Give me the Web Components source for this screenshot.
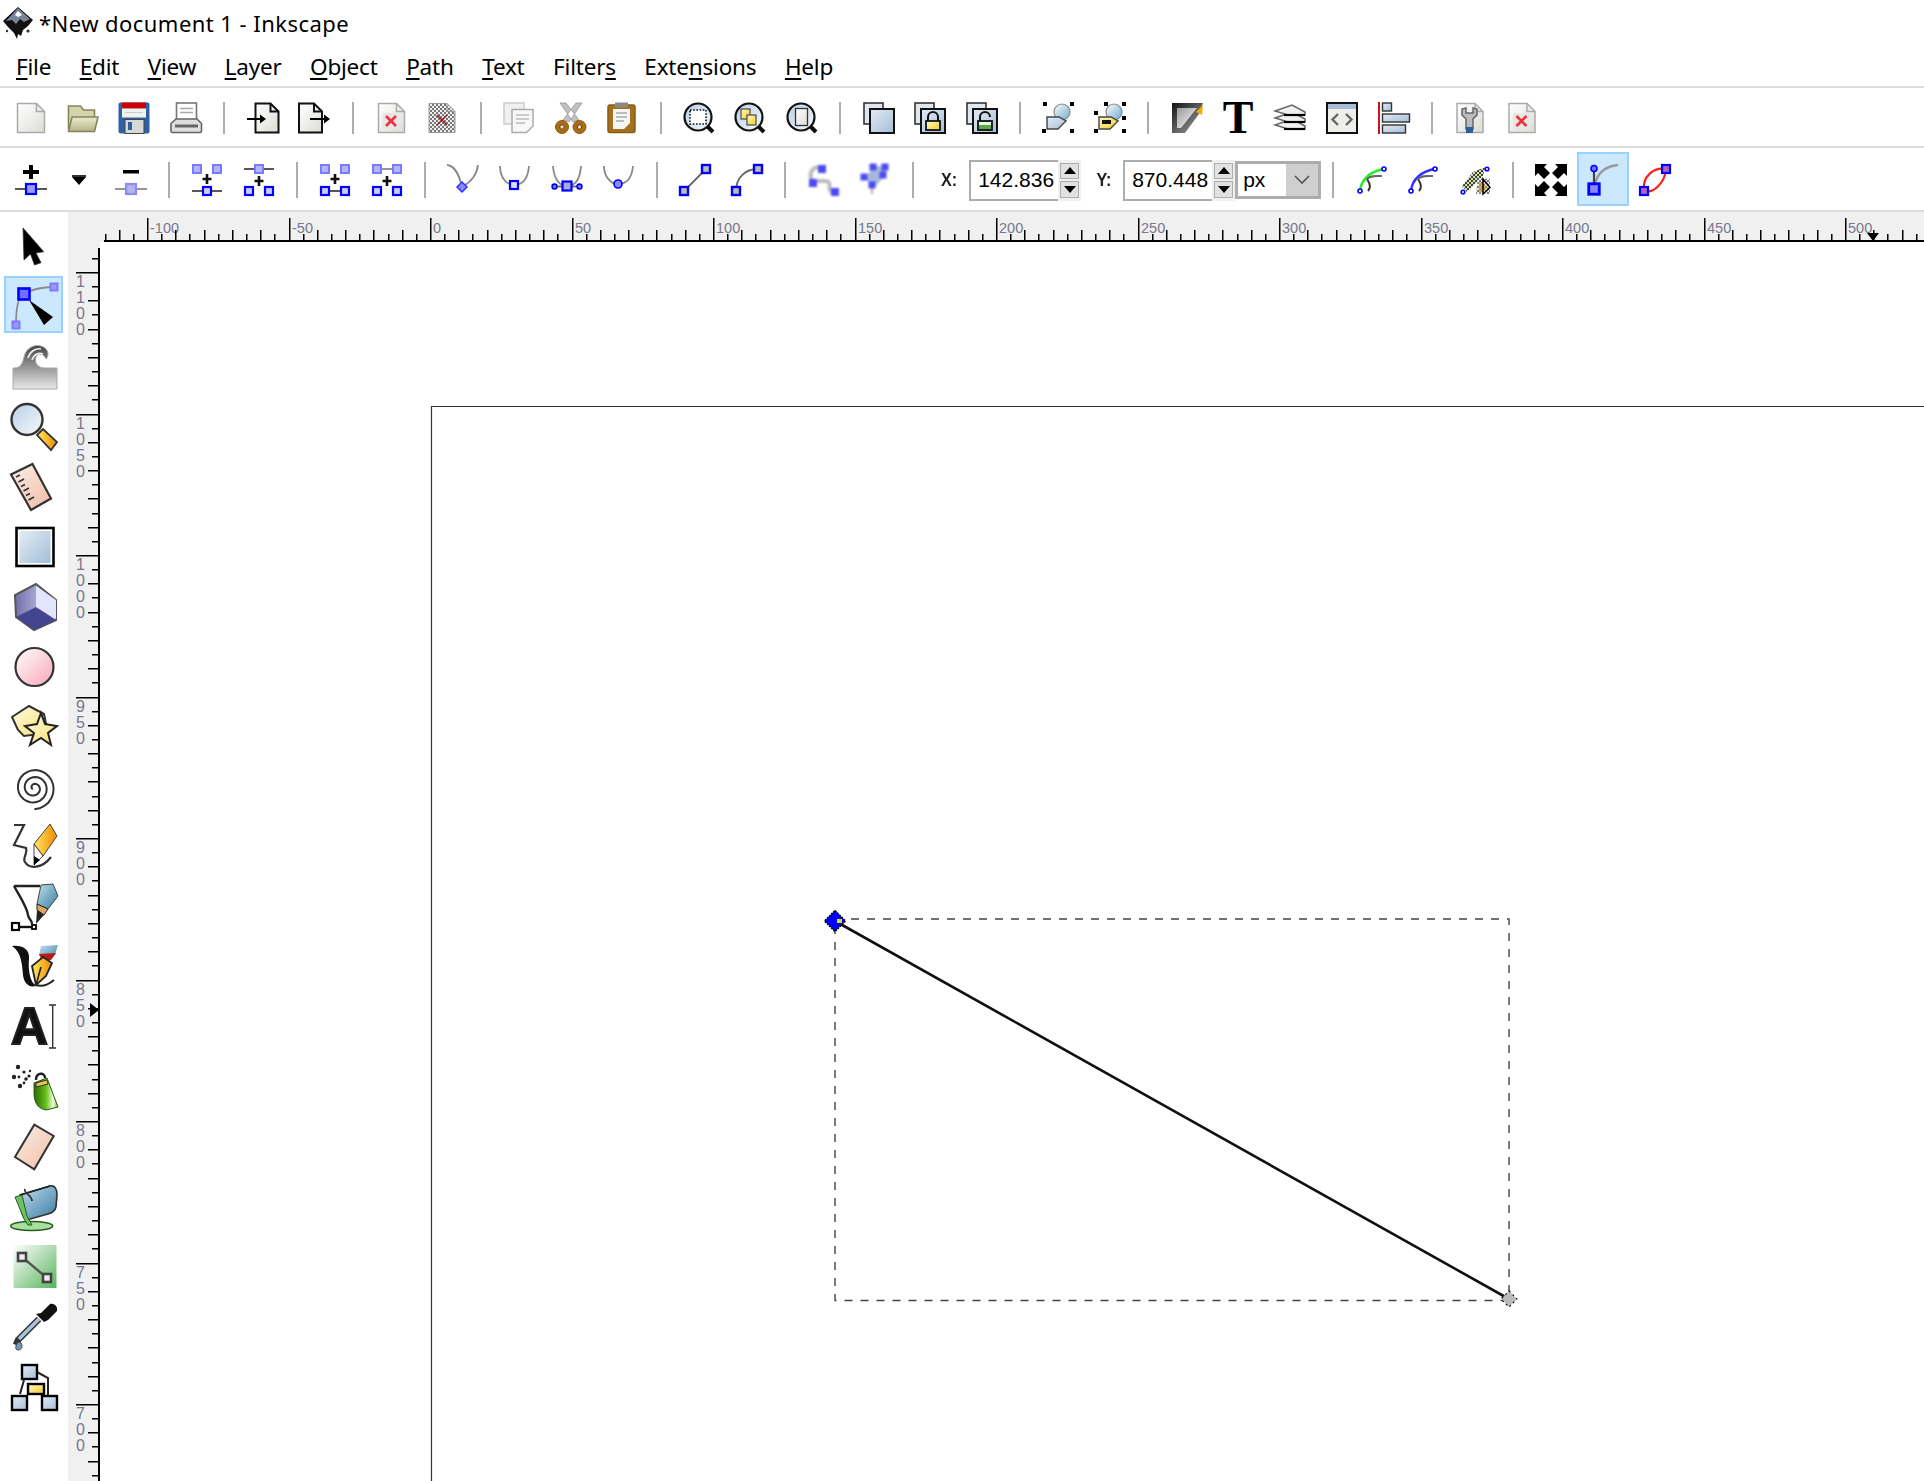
<!DOCTYPE html>
<html>
<head>
<meta charset="utf-8">
<title>Inkscape</title>
<style>
  html, body { margin: 0; padding: 0; background: #fff; overflow: hidden; }
  body { width: 1924px; height: 1481px; display: flex; flex-direction: column; font-family: "Noto Sans", sans-serif; color: #000; }
</style>
</head>
<body>
<ink-title text="*New document 1 - Inkscape"></ink-title>
<ink-menubar>
  <ink-menu label="File" key="0"></ink-menu>
  <ink-menu label="Edit" key="0"></ink-menu>
  <ink-menu label="View" key="0"></ink-menu>
  <ink-menu label="Layer" key="0"></ink-menu>
  <ink-menu label="Object" key="0"></ink-menu>
  <ink-menu label="Path" key="0"></ink-menu>
  <ink-menu label="Text" key="0"></ink-menu>
  <ink-menu label="Filters" key="6"></ink-menu>
  <ink-menu label="Extensions" key="4"></ink-menu>
  <ink-menu label="Help" key="0"></ink-menu>
</ink-menubar>
<ink-bar style="height:58px">
  <ink-btn icon="new"></ink-btn><ink-btn icon="open"></ink-btn><ink-btn icon="save"></ink-btn><ink-btn icon="print"></ink-btn>
  <ink-sep short></ink-sep>
  <ink-btn icon="import"></ink-btn><ink-btn icon="export"></ink-btn>
  <ink-sep short></ink-sep>
  <ink-btn icon="revert"></ink-btn><ink-btn icon="vacuum"></ink-btn>
  <ink-sep short></ink-sep>
  <ink-btn icon="copy"></ink-btn><ink-btn icon="cut"></ink-btn><ink-btn icon="paste"></ink-btn>
  <ink-sep short></ink-sep>
  <ink-btn icon="zoomsel"></ink-btn><ink-btn icon="zoomdraw"></ink-btn><ink-btn icon="zoompage"></ink-btn>
  <ink-sep short></ink-sep>
  <ink-btn icon="dup"></ink-btn><ink-btn icon="clone"></ink-btn><ink-btn icon="unlink"></ink-btn>
  <ink-sep short></ink-sep>
  <ink-btn icon="group"></ink-btn><ink-btn icon="ungroup"></ink-btn>
  <ink-sep short></ink-sep>
  <ink-btn icon="fillstroke"></ink-btn><ink-btn icon="textdlg"></ink-btn><ink-btn icon="layers"></ink-btn><ink-btn icon="xml"></ink-btn><ink-btn icon="align"></ink-btn>
  <ink-sep short></ink-sep>
  <ink-btn icon="prefs"></ink-btn><ink-btn icon="docx"></ink-btn>
</ink-bar>
<ink-bar style="height:62px">
  <ink-btn icon="addnode"></ink-btn><ink-btn icon="drop" style="width:48px"></ink-btn><ink-btn icon="delnode"></ink-btn>
  <ink-sep></ink-sep>
  <ink-btn icon="join"></ink-btn><ink-btn icon="brk"></ink-btn>
  <ink-sep></ink-sep>
  <ink-btn icon="joinseg"></ink-btn><ink-btn icon="delseg"></ink-btn>
  <ink-sep></ink-sep>
  <ink-btn icon="cusp"></ink-btn><ink-btn icon="smooth"></ink-btn><ink-btn icon="auto"></ink-btn><ink-btn icon="sym"></ink-btn>
  <ink-sep></ink-sep>
  <ink-btn icon="segline"></ink-btn><ink-btn icon="segcurve"></ink-btn>
  <ink-sep></ink-sep>
  <ink-btn icon="objpath"></ink-btn><ink-btn icon="strokepath"></ink-btn>
  <ink-sep></ink-sep>
  <ink-spin label="X:" value="142.836" style="width:156px" ></ink-spin>
  <ink-spin label="Y:" value="870.448" style="width:154px"></ink-spin>
  <ink-unit value="px"></ink-unit>
  <ink-sep></ink-sep>
  <ink-btn icon="lpegreen"></ink-btn><ink-btn icon="lpeblue"></ink-btn><ink-btn icon="lpemask"></ink-btn>
  <ink-sep></ink-sep>
  <ink-btn icon="fit"></ink-btn><ink-btn icon="handles" active></ink-btn><ink-btn icon="outline"></ink-btn>
</ink-bar>
<ink-workspace>
  <ink-toolbox slot="tools">
    <ink-tool icon="t-select"></ink-tool>
    <ink-tool icon="t-node" active></ink-tool>
    <ink-tool icon="t-tweak"></ink-tool>
    <ink-tool icon="t-zoom"></ink-tool>
    <ink-tool icon="t-measure"></ink-tool>
    <ink-tool icon="t-rect"></ink-tool>
    <ink-tool icon="t-3d"></ink-tool>
    <ink-tool icon="t-ellipse"></ink-tool>
    <ink-tool icon="t-star"></ink-tool>
    <ink-tool icon="t-spiral"></ink-tool>
    <ink-tool icon="t-pencil"></ink-tool>
    <ink-tool icon="t-pen"></ink-tool>
    <ink-tool icon="t-callig"></ink-tool>
    <ink-tool icon="t-text"></ink-tool>
    <ink-tool icon="t-spray"></ink-tool>
    <ink-tool icon="t-eraser"></ink-tool>
    <ink-tool icon="t-bucket"></ink-tool>
    <ink-tool icon="t-gradient"></ink-tool>
    <ink-tool icon="t-dropper"></ink-tool>
    <ink-tool icon="t-connector"></ink-tool>
  </ink-toolbox>
  <ink-hruler slot="hruler"></ink-hruler>
  <ink-vruler slot="vruler"></ink-vruler>
  <ink-canvas slot="canvas"></ink-canvas>
</ink-workspace>

<script>
// shared gradients, every icon gets its own copy since ids are per shadow root
const lg = (id, a, b, dir = 'x1="0" y1="0" x2="1" y2="1"') =>
  `<linearGradient id="${id}" ${dir}><stop offset="0" stop-color="${a}"/><stop offset="1" stop-color="${b}"/></linearGradient>`;
const V = 'x1="0" y1="0" x2="0" y2="1"';
const H = 'x1="0" y1="0" x2="1" y2="0"';
const DEFS = `<defs>
  ${lg('wd', '#ffffff', '#dcdcd6')}${lg('bl', '#e4ecf5', '#a3bdd8')}${lg('ye', '#fff9c8', '#f5cc20')}
  ${lg('st', '#fffbe4', '#f8e070')}${lg('or', '#ffe860', '#f08a00', H)}${lg('pk', '#ffffff', '#f7a6b6')}
  ${lg('pe', '#fbf0ea', '#f0bba2')}${lg('sl', '#444444', '#e8e8e8', V)}${lg('lb', '#b8cfe6', '#f6f9fc')}
  ${lg('dk', '#111111', '#aaaaaa')}${lg('hx', '#6f6fa8', '#dadafa', H)}${lg('fs', '#999999', '#ffffff')}
  ${lg('gn', '#ffffff', '#58b45e')}${lg('sb', '#bfe0f0', '#3a7aa0')}${lg('ol', '#ececcc', '#b4b488', V)}
  ${lg('cy', '#ffffff', '#6ea8c8')}
  <linearGradient id="gr" x1="0" y1="0" x2="1" y2="0"><stop offset="0" stop-color="#2f6a08"/><stop offset=".5" stop-color="#64c018"/><stop offset=".8" stop-color="#eaffd8"/><stop offset="1" stop-color="#6cc030"/></linearGradient>
  <pattern id="ck" width="4" height="4" patternUnits="userSpaceOnUse"><rect width="4" height="4" fill="#eee"/><rect width="2" height="2" fill="#777"/><rect x="2" y="2" width="2" height="2" fill="#777"/></pattern>
  <pattern id="cg" width="4" height="4" patternUnits="userSpaceOnUse"><rect width="4" height="4" fill="#d4d8b8"/><rect width="2" height="2" fill="#3c4a30"/><rect x="2" y="2" width="2" height="2" fill="#3c4a30"/></pattern>
</defs>`;

const doc = (x, w, st = '#aaa', sw = 1.5, fill = 'url(#wd)') =>
  `<path d="M${x} 1.5H${x + w - 8}L${x + w} 9.5V30.5H${x}Z" fill="${fill}" stroke="${st}" stroke-width="${sw}"/><path d="M${x + w - 8} 1.5V9.5H${x + w}" fill="none" stroke="${st}" stroke-width="${sw}"/>`;
const redx = (cx, cy, r = 5, c = '#f0303c', w = 2.6) =>
  `<path d="M${cx - r} ${cy - r}L${cx + r} ${cy + r}M${cx + r} ${cy - r}L${cx - r} ${cy + r}" stroke="${c}" stroke-width="${w}" fill="none"/>`;
const lens = inner =>
  `<path d="M24 24L30 30" stroke="#111" stroke-width="4"/><circle cx="15" cy="15" r="13.5" fill="url(#lb)" stroke="#111" stroke-width="2.2"/>${inner}`;
const sq = (x, y, s, fill = '#9a9aff', st = '#0000ff', sw = 2) =>
  `<rect x="${x - s / 2}" y="${y - s / 2}" width="${s}" height="${s}" fill="${fill}" stroke="${st}" stroke-width="${sw}"/>`;
const weak = (x, y) => sq(x, y, 8, '#b4b4ff', '#7a7aff', 2);
const strong = (x, y) => sq(x, y, 8, '#ccccff', '#0000ff', 2.2);
const cross = (x, y) => `<path d="M${x} ${y - 5}V${y + 5}M${x - 4.5} ${y}H${x + 4.5}" stroke="#111" stroke-width="2.6"/>`;
const dot = (x, y, r = 2.4, fill = '#8888ff') => `<circle cx="${x}" cy="${y}" r="${r}" fill="${fill}" stroke="#0000ff" stroke-width="1.6"/>`;
const gline = (d, c = '#888', w = 1.8) => `<path d="${d}" fill="none" stroke="${c}" stroke-width="${w}"/>`;
const backs = `<rect x="1" y="1" width="19" height="21" fill="#dfe8f1" stroke="#333" stroke-width="1.6"/><rect x="7" y="7" width="24" height="24" fill="url(#bl)" stroke="#111" stroke-width="2"/>`;
const lpe = c => gline('M4 27C5 15 15 7 28 5', c, 2.4) + gline('M12 27C16 23 13 18 11 15', '#333', 2) + gline('M11 15C15 11 20 12 26 12', '#666', 2) + dot(4, 27, 2, '#fff') + dot(28, 5, 2, '#fff');

function spiral() {
  let d = '';
  for (let a = 0; a <= 18.2; a += 0.25) {
    const r = 1.5 + a * 1.1;
    d += (a ? 'L' : 'M') + (24 + r * Math.cos(a + 2.4)).toFixed(1) + ' ' + (25 + r * Math.sin(a + 2.4)).toFixed(1);
  }
  return d;
}

const ICONS = {
  new: doc(2.5, 27),
  open: `<path d="M1.5 27V4h12l3 4h11v8" fill="#d4d4ac" stroke="#85855c" stroke-width="1.6"/><path d="M1.5 29.5L5 15H31L27.5 29.5Z" fill="url(#ol)" stroke="#85855c" stroke-width="1.6"/>`,
  save: `<rect x=".5" y=".5" width="31" height="31" rx="2" fill="#2f62a4"/><rect x="4" y=".5" width="24" height="6" fill="#cc0000"/><rect x="4" y="6.5" width="24" height="9" fill="#f3f3ee"/><path d="M7 10.5H25" stroke="#ccc"/><rect x="7" y="17.5" width="19" height="14" fill="#d8d8d4" stroke="#444"/><rect x="10" y="20" width="4" height="8" fill="#2f62a4"/>`,
  print: `<rect x="6.5" y="1" width="20" height="18" fill="#fff" stroke="#777" stroke-width="1.6"/><path d="M10 6.5H23M10 10.5H23" stroke="#aaa" stroke-width="1.5"/><path d="M1 29V21.5L6 17H27L31.5 21.5V29Q31.5 30.5 30 30.5H2.5Q1 30.5 1 29Z" fill="#dedede" stroke="#666" stroke-width="1.6"/><rect x="5" y="22.5" width="23" height="3" fill="#666"/>`,
  import: doc(8.5, 23, '#111', 2) + `<path d="M0 17H14" stroke="#000" stroke-width="2"/><path d="M13 12.5L19 17L13 21.5Z" fill="#000"/>`,
  export: doc(1, 23, '#111', 2) + `<path d="M12 17H27" stroke="#000" stroke-width="2"/><path d="M26 12.5L32 17L26 21.5Z" fill="#000"/>`,
  revert: doc(3.5, 26) + `<rect x="7.5" y="11" width="17" height="16" fill="#e6e6e6"/>` + redx(16, 19),
  vacuum: doc(3, 26, '#999', 1, 'url(#ck)') + redx(16, 18, 5, '#a02020', 1.5),
  copy: `<path d="M1 1H21V22H1Z" fill="#f0f0f0" stroke="#ccc" stroke-width="1.5"/><path d="M9 7.5H30V24L23.5 30.5H9Z" fill="#f8f8f8" stroke="#aaa" stroke-width="1.5"/><path d="M13 13H26M13 17H26M13 21H22" stroke="#bbb" stroke-width="1.5"/>`,
  cut: `<path d="M5 1L18 20L24 18L11 1ZM27 1L14 20L8 18L21 1Z" fill="#c0c0c0" stroke="#999" stroke-width=".8"/><circle cx="7" cy="25" r="6.5" fill="#a86c12" stroke="#8a5a10"/><circle cx="24.5" cy="25" r="6.5" fill="#a86c12" stroke="#8a5a10"/><circle cx="7" cy="25" r="2.2" fill="#e8dcc8" stroke="#6a4208"/><circle cx="24.5" cy="25" r="2.2" fill="#e8dcc8" stroke="#6a4208"/>`,
  paste: `<rect x="2" y="3" width="27" height="27.5" rx="2" fill="#a5701e" stroke="#8a5a14" stroke-width="1.5"/><path d="M7 7H24V21L18 27H7Z" fill="#f6f6f4"/><rect x="9" y=".5" width="13" height="5" fill="#8a8a8a"/><path d="M10 11H21M10 15H21M10 19H18" stroke="#aaa" stroke-width="1.5"/>`,
  zoomsel: lens(`<rect x="7" y="8" width="16" height="14" fill="#fff" stroke="#111" stroke-width="1.6" stroke-dasharray="1.6 1.6"/>`),
  zoomdraw: lens(`<rect x="7" y="7" width="9" height="10" fill="url(#ye)" stroke="#555" stroke-width="1.3"/><rect x="13" y="13" width="9" height="10" fill="url(#ye)" stroke="#555" stroke-width="1.3"/>`),
  zoompage: lens(`<rect x="9.5" y="6.5" width="12" height="17" fill="url(#wd)" stroke="#333" stroke-width="1.3"/>`),
  dup: backs,
  clone: backs + `<path d="M14 20V15a5 5 0 0 1 10 0V20" fill="none" stroke="#111" stroke-width="2"/><rect x="12" y="19" width="14" height="9" fill="url(#ye)" stroke="#111" stroke-width="1.8"/>`,
  unlink: backs + `<path d="M14 20V15a5 5 0 0 1 10 0" fill="none" stroke="#111" stroke-width="2"/><rect x="12" y="19" width="14" height="9" fill="#5fa84a" stroke="#111" stroke-width="1.8"/><rect x="13" y="20" width="12" height="3" fill="#eef6e8"/>`,
  group: `<circle cx="20" cy="10" r="8" fill="url(#cy)" stroke="#888" stroke-width="1.2"/><path d="M5 15H17L24 19L16 27H5Z" fill="url(#bl)" stroke="#444" stroke-width="1.4"/><rect x="0" y="27" width="4" height="4" fill="#000"/><rect x="28" y="27" width="4" height="4" fill="#000"/><rect x="0" y="0" width="4" height="4" fill="#000" transform="translate(1 0)"/><rect x="28" y="0" width="4" height="4" fill="#000"/>`,
  ungroup: `<circle cx="20" cy="10" r="8" fill="url(#cy)" stroke="#888" stroke-width="1.2"/><path d="M5 15H17L24 19L16 27H5Z" fill="url(#ye)" stroke="#444" stroke-width="1.4"/><rect x="8" y="18" width="9" height="4" fill="#111"/><rect x="0" y="27" width="4" height="4" fill="#000"/><rect x="28" y="27" width="4" height="4" fill="#000"/><rect x="0" y="9" width="4" height="4" fill="#000"/><rect x="28" y="14" width="4" height="4" fill="#000"/><rect x="10" y="0" width="4" height="4" fill="#000"/><rect x="28" y="0" width="4" height="4" fill="#000"/>`,
  fillstroke: `<g style="filter:blur(.5px)"><path d="M1 1H32L28 12L14 31H1Z" fill="url(#dk)"/><path d="M6 6H26L10 26H6Z" fill="url(#fs)"/><path d="M25 10L32 3L31 13Z" fill="#f0b000"/></g>`,
  textdlg: `<text x="16" y="31" text-anchor="middle" font-family="Liberation Serif, serif" font-weight="700" font-size="46" fill="#000">T</text>`,
  layers: [20, 13, 6].map(y => `<path d="M1 ${y + 3}L18 ${y - 3}L31 ${y + 4}V${y + 7}L14 ${y + 7}L1 ${y + 3}Z" fill="#f0f0f0" stroke="#666" stroke-width="1.5"/><path d="M10 ${y + 7}H31" stroke="#000" stroke-width="2.2"/>`).join(''),
  xml: `<rect x="1" y="1" width="30" height="30" fill="#eeeeea" stroke="#111" stroke-width="2"/><rect x="2" y="2" width="28" height="5" fill="#a4bcd6"/><path d="M12 12L6.5 17.5L12 23M20 12L25.5 17.5L20 23" fill="none" stroke="#666" stroke-width="2.4"/>`,
  align: `<rect x="0" y="0" width="2" height="32" fill="#c8141e"/><rect x="4.5" y="1" width="9" height="8" fill="url(#bl)" stroke="#333" stroke-width="1.4"/><rect x="4.5" y="12" width="27" height="8" fill="url(#bl)" stroke="#333" stroke-width="1.4"/><rect x="4.5" y="23" width="23" height="8" fill="url(#bl)" stroke="#333" stroke-width="1.4"/>`,
  prefs: doc(3, 26) + `<path d="M8 7V13L12 17V27H19V17L23 13V7L19 6V11H12V6Z" fill="#bbb" stroke="#666" stroke-width="1.5"/><rect x="12" y="25" width="7" height="6" fill="#2f5e96"/>`,
  docx: doc(3, 26) + `<rect x="7" y="11" width="17" height="16" fill="#e6e6e6"/>` + redx(15.5, 19),

  addnode: `<path d="M16 1V15M8 8H24" stroke="#000" stroke-width="4"/>` + gline('M0 25H32', '#444') + sq(16, 25, 10, '#9a9aff', '#0000ff', 2.2),
  drop: `<path d="M7 12H21" stroke="#333" stroke-width="2"/><path d="M7 13L14 21L21 13Z" fill="#000"/>`,
  delnode: `<rect x="8" y="6" width="16" height="3.5" fill="#000"/>` + gline('M0 25H32', '#888') + sq(16, 25, 10, '#b4b4f4', '#8c8cf0', 2.2),
  join: weak(6, 5) + weak(26, 5) + cross(16, 15) + gline('M1 27H31', '#444') + strong(16, 27),
  brk: gline('M1 5H31', '#444') + weak(16, 5) + cross(16, 17) + gline('M1 27H7M25 27H31', '#444') + strong(6, 27) + strong(26, 27),
  joinseg: gline('M1 5H5M27 5H31', '#888') + weak(6, 5) + weak(26, 5) + cross(16, 15) + gline('M1 27H31', '#444') + strong(6, 27) + strong(26, 27),
  delseg: gline('M1 5H31', '#888') + weak(6, 5) + weak(26, 5) + cross(16, 17) + gline('M1 27H7M25 27H31', '#444') + strong(6, 27) + strong(26, 27),
  cusp: gline('M0 1C8 2 12 10 15 23M31 1C30 10 24 18 15 23') + `<path d="M15 18L20 23L15 28L10 23Z" fill="#8888ff" stroke="#3030ff" stroke-width="1.5"/>`,
  smooth: gline('M1 2C1 14 8 21 15 21C24 21 29 14 30 2') + sq(15, 21, 8, '#ddddff', '#0000ff', 2.2),
  auto: gline('M2 2C3 16 9 22 16 22C24 22 29 16 30 2') + gline('M3 22.5H29', '#666') + sq(16, 22, 9, '#aaaadd', '#0000ff', 2.2) + dot(3.5, 22.5) + dot(28.5, 22.5),
  sym: gline('M1 2C1 13 8 20 15 20C24 20 29 13 30 2') + dot(15, 20, 4),
  segline: gline('M5 27L27 5', '#666') + sq(5, 27, 8, '#bbb', '#0000ff', 2.4) + sq(27, 5, 8, '#bbb', '#0000ff', 2.4),
  segcurve: gline('M5 27C5 14 14 5 27 5', '#666') + sq(5, 27, 8, '#bbb', '#0000ff', 2.4) + sq(27, 5, 8, '#bbb', '#0000ff', 2.4),
  objpath: `<g style="filter:blur(.8px)">` + gline('M13 3C3 3 1 13 7 17H18C28 17 16 29 30 29', '#bbb', 4) + [[15, 5], [6, 19], [28, 28]].map(p => `<rect x="${p[0] - 4}" y="${p[1] - 4}" width="8" height="8" fill="#4a4af0"/>`).join('') + `</g>`,
  strokepath: `<g style="filter:blur(.8px)"><path d="M6 13L16 2H30L24 14L14 25Z" fill="#a8b8dc"/>` + [[14, 3], [24, 11], [5, 13], [13, 21], [26, 3]].map(p => `<rect x="${p[0] - 3.5}" y="${p[1] - 3.5}" width="7" height="7" fill="#4a4af0"/>`).join('') + gline('M13 24V30', '#aaa', 2) + `</g>`,
  lpegreen: lpe('#22ee22'),
  lpeblue: lpe('#3030ff'),
  lpemask: `<path d="M3 22L14 8L26 3L24 12L14 22L8 28Z" fill="url(#cg)"/><path d="M19 14L31 15V30H17Z" fill="url(#ck)"/><path d="M20 17L29 23.5L20 30Z" fill="#c8a030" opacity=".8"/><path d="M24 15L31 23.5L24 30Z" fill="none" stroke="#000" stroke-width="1.5"/>` + dot(4, 28, 1.8, '#fff') + dot(28, 5, 1.8, '#fff'),
  fit: [0, 90, 180, 270].map(r => `<path transform="rotate(${r} 16 16)" d="M0 0H12L9 3L15 9L9 15L3 9L0 12Z" fill="#000"/>`).join(''),
  handles: gline('M8 22C9 10 18 2 31 1', '#999', 2.4) + gline('M7 20V6', '#444', 2.2) + dot(7, 4.5, 3, '#7070ff') + sq(7, 25, 10.5, '#8888ff', '#0000ff', 2.8),
  outline: gline('M5 27C3 12 15 3 27 5M5 27C15 30 26 18 27 5', '#ff1c1c', 2.2) + sq(5, 27, 8, '#b060c0', '#0000ff', 2.2) + sq(27, 5, 8, '#b060c0', '#0000ff', 2.2),

  't-select': `<path d="M13 5L14 37L20.5 31L24.5 42L31 39.7L26 30L33.7 28.7Z" fill="#000" stroke="#333" stroke-width=".8"/>`,
  't-node': gline('M6 42C6 24 8 13 14 11C24 5 34 4 44 4', '#8a8a8a', 1.8) + sq(44, 4, 7, '#9a9aff', '#7a7aff', 2) + sq(6, 42, 7, '#9a9aff', '#7a7aff', 2) + sq(14, 11, 11, '#7070ff', '#0000ff', 2.6) + `<path d="M19 17L43 34L34 42Z" fill="#000"/>`,
  't-tweak': `<path d="M3 46V25C8 25 12 24 14 14C16 5 24 1 31 3C38 5 40 12 36 16C34 11 28 9 26 14C24 20 28 25 35 25H47V46Z" fill="url(#sl)" stroke="#aaa" stroke-width="1"/><path d="M18 15C20 8 26 5 31 6M22 17C24 11 29 9 33 11" fill="none" stroke="#eee" stroke-width="1.6"/>`,
  't-zoom': `<path d="M27 32L33 26L47 39L41 47Z" fill="url(#or)" stroke="#333" stroke-width="1.8"/><circle cx="17" cy="16.5" r="15.5" fill="url(#lb)" stroke="#333" stroke-width="2.4"/>`,
  't-measure': `<path d="M1 11.5L22.5 1L41 35.5L21 47Z" fill="url(#pe)" stroke="#333" stroke-width="2.2"/><path d="M6 14L10 12M8.5 19L14 16M11 23.5L15 21.5M13.5 28L19 25M16 32.5L20 30.5M18.5 37L24 34" stroke="#333" stroke-width="1.8"/>`,
  't-rect': `<rect x="6.5" y="5" width="37" height="38" fill="#fff" stroke="#000" stroke-width="2.6"/><rect x="9.5" y="8" width="31" height="32" fill="url(#bl)"/>`,
  't-3d': `<path d="M26 1L46 17V37L24 47L6 34L5 12Z" fill="url(#hx)" stroke="#555" stroke-width="2"/><path d="M26 24L6 34L24 47L46 37Z" fill="#45458f"/><path d="M26 3V24L46 36V17Z" fill="#e4e4fc"/>`,
  't-ellipse': `<circle cx="24.5" cy="24" r="19" fill="url(#pk)" stroke="#333" stroke-width="2.2"/>`,
  't-star': `<path d="M2 14L19 3L34 11L38 30L14 33L8 27Z" fill="url(#st)" stroke="#333" stroke-width="2"/><path d="M31 10L35 21L47 23L38 30L41 42L31 35L20 42L24 30L15 23L27 21Z" fill="url(#st)" stroke="#222" stroke-width="2"/>`,
  't-spiral': `<path d="${spiral()}" fill="none" stroke="#333" stroke-width="2"/>`,
  't-pencil': gline('M4 2H14L4 22L16 25C18 30 12 36 15 39C19 46 32 46 41 34', '#333', 2.2) + `<path d="M24 21L40 1L47 13L33 33Z" fill="url(#or)" stroke="#444" stroke-width="1"/><path d="M24 21L33 33L24 42Z" fill="#fff" stroke="#444"/><path d="M24 42V33L30 37Z" fill="#000"/>`,
  't-pen': gline('M4 3H30M4 3C10 14 17 24 18 32C19 38 22 36 22 41', '#222', 2.4) + gline('M9 44H23', '#111', 2.4) + `<rect x="2" y="40" width="7" height="7" fill="#fff" stroke="#000" stroke-width="2.2"/><rect x="22" y="42" width="4" height="4" fill="#fff" stroke="#000" stroke-width="1.8"/><path d="M31 2L43 1L48 13L38 26L27 21Z" fill="url(#sb)" stroke="#444"/><path d="M27 21L38 26L34 32L27 27Z" fill="#d8a860" stroke="#222"/><path d="M27 27L34 32L26 41Z" fill="#222"/>`,
  't-callig': `<path d="M2 3C12 2 20 6 19 16C18 26 20 40 26 42C22 46 14 42 13 32C12 22 12 10 2 3Z" fill="#111"/>` + gline('M26 42C32 44 38 42 44 37', '#222', 2.2) + `<path d="M31 3L48 2L45 12L36 20L29 12Z" fill="url(#sb)"/><path d="M29 11L46 10L41 17L33 20Z" fill="#b81a1a"/><path d="M26 42L22 23L33 14L42 20L36 33Z" fill="url(#or)" stroke="#222" stroke-width="1.8"/><path d="M26 42L31 24" stroke="#222" stroke-width="1.6"/>`,
  't-text': `<text x="1" y="41" font-family="Liberation Sans, sans-serif" font-weight="700" font-size="51" fill="#111" stroke="#222" stroke-width="2">A</text><path d="M39 2H46M39 45H46M42.7 2V45" stroke="#333" stroke-width="1.4" fill="none"/>`,
  't-spray': [[8, 4, 2.2], [4, 14, 2.2], [10, 23, 2.2], [14, 9, 1.6], [16, 16, 1.8], [9, 14, 1.4], [19, 13, 1.6], [14, 20, 1.4], [20, 8, 1.2]].map(p => `<circle cx="${p[0]}" cy="${p[1]}" r="${p[2]}" fill="#222"/>`).join('') + `<path d="M26 17C26 9 35 9 35 15" fill="none" stroke="#222" stroke-width="2.4"/><path d="M24 20L37 15L48 44L36 47C30 46 24 42 24 30Z" fill="url(#gr)" stroke="#2a5a10"/><path d="M26 20L37 17L38 21L26 24Z" fill="#e8c850" stroke="#333"/>`,
  't-eraser': `<path d="M24.3 1.7L43.7 13L24.3 46.3L5 34Z" fill="url(#pe)" stroke="#333" stroke-width="2"/>`,
  't-bucket': `<ellipse cx="21.7" cy="43" rx="21" ry="4.6" fill="#a8e0a0" stroke="#2a5a20" stroke-width="1.5"/><path d="M10 12L40 3C45 2 47 6 47 12L46 24C45 28 42 30 38 31L20 36C16 37 13 34 12 30Z" fill="url(#sb)" stroke="#333" stroke-width="1.6"/><path d="M5 14L12 12L17 33L22 42H18L14 36Z" fill="#6cc060" stroke="#2a5a20"/><path d="M10 12L40 3" fill="none" stroke="#222" stroke-width="1.4"/>` + gline('M15 6C13 10 22 12 22 18', '#333', 1.8),
  't-gradient': `<rect x="3.5" y="2" width="43" height="43" fill="url(#gn)"/><path d="M12 14L37 35" stroke="#555" stroke-width="2.4"/><rect x="8" y="10" width="8" height="8" fill="#eee" stroke="#444" stroke-width="2.6"/><rect x="33" y="31" width="8" height="8" fill="#eee" stroke="#444" stroke-width="2.6"/>`,
  't-dropper': `<path d="M29 16L8 37L6 42" fill="none" stroke="#333" stroke-width="6.5"/><path d="M29 16L9 36" fill="none" stroke="#a8c4dc" stroke-width="3.6"/><path d="M8 39C5 43 5 47 8 47C12 47 13 43 11 40Z" fill="#6f9bc0" stroke="#444"/><path d="M26 11L34 19L38 17L47 8C48 3 44 0 40 1L31 10Z" fill="#111"/>`,
  't-connector': gline('M27 9L38 15V33M14 17L10 31', '#222', 2) + `<rect x="12" y="2" width="15" height="14" fill="url(#bl)" stroke="#000" stroke-width="2.4"/><rect x="2" y="33" width="15" height="14" fill="url(#bl)" stroke="#000" stroke-width="2.4"/><rect x="32" y="33" width="15" height="14" fill="url(#bl)" stroke="#000" stroke-width="2.4"/><rect x="18" y="21" width="16" height="10" fill="url(#ye)" stroke="#000" stroke-width="2.4"/>`
};

class InkIcon extends HTMLElement {
  constructor() { super(); this.attachShadow({ mode: 'open' }); }
  connectedCallback() {
    const name = this.getAttribute('name');
    const size = name.startsWith('t-') ? 48 : 32;
    this.shadowRoot.innerHTML = `<style>:host{display:block;width:${size}px;height:${size}px}svg{display:block;overflow:visible}</style>
      <svg width="${size}" height="${size}" viewBox="0 0 ${size} ${size}">${DEFS}${ICONS[name] || ''}</svg>`;
  }
}

class InkTitle extends HTMLElement {
  constructor() { super(); this.attachShadow({ mode: 'open' }); }
  connectedCallback() {
    this.shadowRoot.innerHTML = `<style>
      :host{display:flex;align-items:center;height:44px;flex:none;padding-left:2px;gap:5px;font-size:22px;letter-spacing:.45px}
      span{padding-top:2px}
      svg{flex:none;margin-top:2px}
    </style>
    <svg width="32" height="32" viewBox="0 0 32 32">
      <path d="M16 0L31 13L26 19L21 23L19 29L16 27L15 32L12 26L8 22L6 20L1 14Z" fill="#111"/>
      <path d="M16 1L28 12L22 15L18 12L14 17L10 13L4 14Z" fill="#7a8698"/>
      <path d="M16 4L20 8L16 10L13 8Z" fill="#fff"/>
      <circle cx="26" cy="24" r="1.6" fill="#333"/><circle cx="5" cy="24" r="1.2" fill="#333"/>
    </svg><span>${this.getAttribute('text')}</span>`;
  }
}

class InkMenubar extends HTMLElement {
  constructor() { super(); this.attachShadow({ mode: 'open' }); }
  connectedCallback() {
    this.shadowRoot.innerHTML = `<style>
      :host{display:flex;flex:none;align-items:center;gap:28.5px;padding:2px 0 0 16px;border-bottom:2px solid #ddd;box-sizing:border-box;height:44px;font-size:22.5px}
    </style><slot></slot>`;
  }
}

class InkMenu extends HTMLElement {
  constructor() { super(); this.attachShadow({ mode: 'open' }); }
  connectedCallback() {
    const label = this.getAttribute('label');
    const k = +this.getAttribute('key');
    this.shadowRoot.innerHTML = `<style>
      :host{display:block;letter-spacing:-.2px;color:#000}
      u{text-underline-offset:3px;text-decoration-thickness:1.5px}
    </style>${label.slice(0, k)}<u>${label[k]}</u>${label.slice(k + 1)}`;
  }
}

class InkBar extends HTMLElement {
  constructor() { super(); this.attachShadow({ mode: 'open' }); }
  connectedCallback() {
    this.shadowRoot.innerHTML = `<style>
      :host{display:flex;flex:none;align-items:center;padding-left:5px;border-bottom:2px solid #ddd;box-sizing:content-box}
    </style><slot></slot>`;
  }
}

class InkBtn extends HTMLElement {
  constructor() { super(); this.attachShadow({ mode: 'open' }); }
  connectedCallback() {
    this.shadowRoot.innerHTML = `<style>
      :host{display:flex;flex:none;align-items:center;justify-content:center;width:51.8px;height:54px;box-sizing:border-box;border:2px solid transparent}
      :host([active]){background:#cce8ff;border-color:#99d1ff}
      ink-icon{margin-top:2px}
    </style><ink-icon name="${this.getAttribute('icon')}"></ink-icon>`;
  }
}

class InkSep extends HTMLElement {
  constructor() { super(); this.attachShadow({ mode: 'open' }); }
  connectedCallback() {
    this.shadowRoot.innerHTML = `<style>
      :host{display:flex;flex:none;justify-content:center;width:24.5px;padding-top:2px}
      i{display:block;width:2px;height:36px;background:#adadad}
      :host([short]) i{height:32px}
    </style><i></i>`;
  }
}

class InkSpin extends HTMLElement {
  constructor() { super(); this.attachShadow({ mode: 'open' }); }
  connectedCallback() {
    this.shadowRoot.innerHTML = `<style>
      :host{display:flex;flex:none;align-items:center;margin-top:2px;font-family:"Liberation Sans",sans-serif;font-size:21px}
      .lab{flex:1;text-align:right;padding-right:10px;color:#222;font-size:19px;font-weight:700;transform:scaleX(.85)}
      .inp{box-sizing:border-box;width:89px;height:41px;border:2.5px solid #adadad;border-right:0;background:#fff;display:flex;align-items:center;padding-left:7px}
      .spin{box-sizing:border-box;width:23px;height:41px;background:#f0f0f0;padding:3px 2px;display:flex;flex-direction:column;gap:2px}
      .spin b{flex:1;background:#e1e1e1;border:1.5px solid #adadad;display:flex;align-items:center;justify-content:center}
      .spin i{display:block;width:0;height:0;border-left:6px solid transparent;border-right:6px solid transparent}
      .up{border-bottom:7px solid #000}
      .dn{border-top:7px solid #000}
    </style>
    <span class="lab">${this.getAttribute('label')}</span>
    <span class="inp">${this.getAttribute('value')}</span>
    <span class="spin"><b><i class="up"></i></b><b><i class="dn"></i></b></span>`;
  }
}

class InkUnit extends HTMLElement {
  constructor() { super(); this.attachShadow({ mode: 'open' }); }
  connectedCallback() {
    this.shadowRoot.innerHTML = `<style>
      :host{display:flex;flex:none;box-sizing:border-box;width:86px;height:38px;margin-top:2px;border:3px solid #adadad;background:#fff;font-family:"Liberation Sans",sans-serif;font-size:21px}
      span{flex:1;padding-left:5px;line-height:31px;color:#000}
      b{display:flex;align-items:center;justify-content:center;width:32px;background:#cfcfcf}
      svg{display:block}
    </style><span>${this.getAttribute('value')}</span>
    <b><svg width="16" height="10" viewBox="0 0 16 10"><path d="M1 1L8 8L15 1" fill="none" stroke="#555" stroke-width="1.6"/></svg></b>`;
  }
}

class InkWorkspace extends HTMLElement {
  constructor() { super(); this.attachShadow({ mode: 'open' }); }
  connectedCallback() {
    this.shadowRoot.innerHTML = `<style>
      :host{display:grid;flex:1;min-height:0;grid-template-columns:68px 32px 1fr;grid-template-rows:30px 1fr;overflow:hidden}
      ::slotted([slot=tools]){grid-row:1/3;grid-column:1}
      ::slotted([slot=hruler]){grid-row:1;grid-column:2/4}
      ::slotted([slot=vruler]){grid-row:2;grid-column:2}
      ::slotted([slot=canvas]){grid-row:2;grid-column:3}
    </style>
    <slot name="tools"></slot><slot name="hruler"></slot><slot name="vruler"></slot><slot name="canvas"></slot>`;
  }
}

class InkToolbox extends HTMLElement {
  constructor() { super(); this.attachShadow({ mode: 'open' }); }
  connectedCallback() {
    this.shadowRoot.innerHTML = `<style>
      :host{display:flex;flex-direction:column;padding-top:5px;background:#fff;min-height:0}
    </style><slot></slot>`;
  }
}

class InkTool extends HTMLElement {
  constructor() { super(); this.attachShadow({ mode: 'open' }); }
  connectedCallback() {
    this.shadowRoot.innerHTML = `<style>
      :host{display:flex;flex:none;align-items:center;justify-content:center;height:60px;width:59px;margin-left:4px;box-sizing:border-box}
      div{display:flex;align-items:center;justify-content:center;width:59px;height:57px;box-sizing:border-box;border:2px solid transparent}
      :host([active]) div{background:#cce8ff;border-color:#99d1ff;margin-top:-5px;padding-top:5px}
    </style><div><ink-icon name="${this.getAttribute('icon')}"></ink-icon></div>`;
  }
}

// rulers: 50 units are 141.5px, ticks every 5 units
const RULER_STEP = 141.5 / 10;
const LABEL_COLOR = 'font-family="Liberation Sans, sans-serif" fill="#77778e"';

class InkHRuler extends HTMLElement {
  constructor() { super(); this.attachShadow({ mode: 'open' }); }
  connectedCallback() {
    const x0 = 147 - 68;
    let out = `<rect x="36" y="28" width="1820" height="2" fill="#000"/>`;
    for (let i = -3; i < 130; i++) {
      const x = x0 + i * RULER_STEP;
      if (x < 36) continue;
      const px = Math.round(x);
      if (i % 10 === 0) {
        out += `<rect x="${px}" y="6" width="1.5" height="23" fill="#000"/>`;
        out += `<text x="${px + 3}" y="21" font-size="14.5" ${LABEL_COLOR}>${-100 + i * 5}</text>`;
      } else {
        out += `<rect x="${px}" y="${i % 2 ? 22 : 18}" width="1.5" height="${i % 2 ? 7 : 11}" fill="#000"/>`;
      }
    }
    // pointer position marker
    out += `<path d="M1799 21H1811L1805 29Z" fill="#000"/>`;
    this.shadowRoot.innerHTML = `<style>:host{display:block;background:#f0f0f0}svg{display:block}</style>
      <svg width="1856" height="30">${out}</svg>`;
  }
}

class InkVRuler extends HTMLElement {
  constructor() { super(); this.attachShadow({ mode: 'open' }); }
  connectedCallback() {
    const y0 = 272 - 242;
    let out = `<rect x="30" y="6" width="2" height="1233" fill="#000"/>`;
    for (let i = -1; i < 90; i++) {
      const y = y0 + i * RULER_STEP;
      const py = Math.round(y);
      if (i % 10 === 0) {
        out += `<rect x="8" y="${py}" width="23" height="1.5" fill="#000"/>`;
        const txt = String(1100 - i * 5);
        [...txt].forEach((d, n) => {
          out += `<text x="8" y="${py + 15 + n * 16}" font-size="16" ${LABEL_COLOR}>${d}</text>`;
        });
      } else {
        const w = i % 2 ? 7 : 11;
        out += `<rect x="${31 - w}" y="${py}" width="${w}" height="1.5" fill="#000"/>`;
      }
    }
    out += `<path d="M22 761L31 768L22 775Z" fill="#000"/>`;
    this.shadowRoot.innerHTML = `<style>:host{display:block;background:#f0f0f0;min-height:0;overflow:hidden}svg{display:block}</style>
      <svg width="32" height="1239">${out}</svg>`;
  }
}

class InkCanvas extends HTMLElement {
  constructor() { super(); this.attachShadow({ mode: 'open' }); }
  connectedCallback() {
    // coordinates on the canvas are screen minus (100,242)
    this.shadowRoot.innerHTML = `<style>:host{display:block;background:#fff;overflow:hidden;min-height:0}svg{display:block}</style>
    <svg width="1824" height="1239" viewBox="0 0 1824 1239">
      <path d="M331.5 1239V164.5H1824" fill="none" stroke="#333" stroke-width="1.2"/>
      <rect x="735" y="677" width="674" height="381.5" fill="none" stroke="#444" stroke-width="1.4" stroke-dasharray="8 8"/>
      <path d="M735 679L1409 1057" fill="none" stroke="#111" stroke-width="2.6"/>
      <path d="M735 668.5L745.5 679L735 689.5L724.5 679Z" fill="#0000ff" stroke="#000" stroke-width="1.5" stroke-dasharray="2 1"/>
      <rect x="737" y="677" width="5" height="4" fill="#e8d820"/>
      <path d="M1409 1049L1417 1057L1409 1065L1401 1057Z" fill="#bbb" stroke="#000" stroke-width="1.1" stroke-dasharray="2 3"/>
    </svg>`;
  }
}

customElements.define('ink-icon', InkIcon);
customElements.define('ink-title', InkTitle);
customElements.define('ink-menubar', InkMenubar);
customElements.define('ink-menu', InkMenu);
customElements.define('ink-bar', InkBar);
customElements.define('ink-btn', InkBtn);
customElements.define('ink-sep', InkSep);
customElements.define('ink-spin', InkSpin);
customElements.define('ink-unit', InkUnit);
customElements.define('ink-workspace', InkWorkspace);
customElements.define('ink-toolbox', InkToolbox);
customElements.define('ink-tool', InkTool);
customElements.define('ink-hruler', InkHRuler);
customElements.define('ink-vruler', InkVRuler);
customElements.define('ink-canvas', InkCanvas);
</script>
</body>
</html>
